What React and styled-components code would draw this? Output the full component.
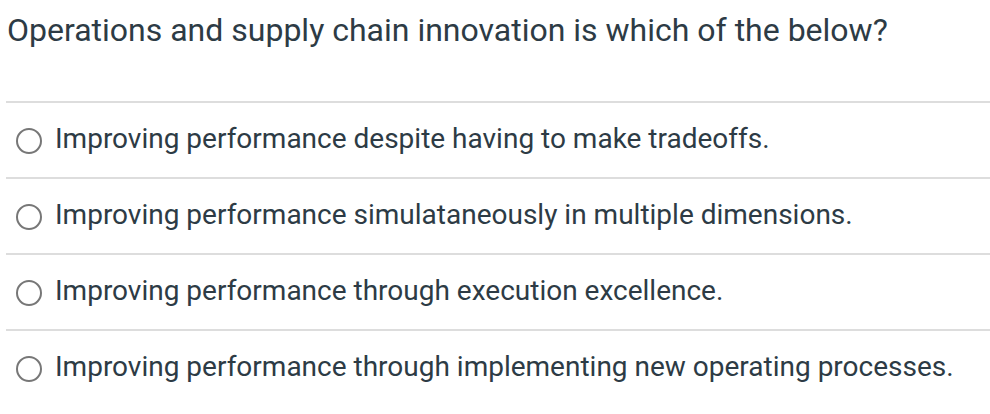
import React from 'react';
import styled, { createGlobalStyle } from 'styled-components';

const GlobalStyle = createGlobalStyle`
  body {
    margin: 0;
    background: #fff;
    font-family: Roboto, "Liberation Sans", sans-serif;
    color: #2d3b45;
  }
`;

const Wrapper = styled.div`
  width: 990px;
  padding-top: 8px;
`;

const Question = styled.h2`
  margin: 0 0 0 7px;
  font-size: 32px;
  font-weight: 400;
  line-height: 44px;
`;

const Answers = styled.ul`
  list-style: none;
  margin: 49px 0 0 6px;
  padding: 0;
`;

const Answer = styled.li`
  display: flex;
  align-items: center;
  gap: 13px;
  height: 74px;
  border-top: 2px solid #dddddd;
  padding-left: 10px;
  font-size: 28px;
`;

const Radio = styled.span`
  width: 22px;
  height: 22px;
  margin-top: 1px;
  border-radius: 50%;
  border: 2px solid #777777;
  flex-shrink: 0;
`;

const Label = styled.span`
  padding-bottom: 4px;
`;

const answers = [
  'Improving performance despite having to make tradeoffs.',
  'Improving performance simulataneously in multiple dimensions.',
  'Improving performance through execution excellence.',
  'Improving performance through implementing new operating processes.',
];

function App() {
  return (
    <Wrapper>
      <GlobalStyle />
      <Question>Operations and supply chain innovation is which of the below?</Question>
      <Answers>
        {answers.map((text) => (
          <Answer key={text}>
            <Radio />
            <Label>{text}</Label>
          </Answer>
        ))}
      </Answers>
    </Wrapper>
  );
}

export default App;
